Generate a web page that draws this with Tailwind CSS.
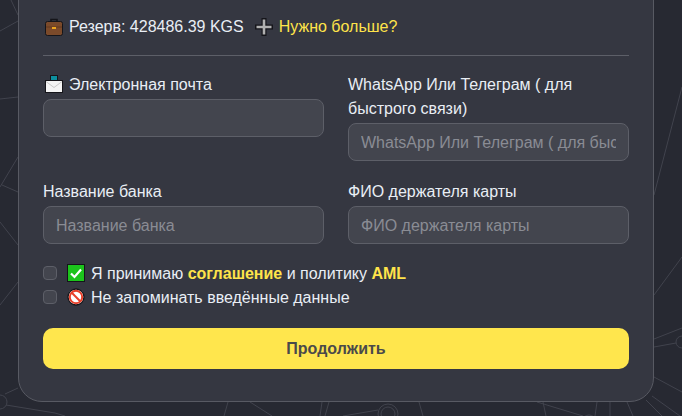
<!DOCTYPE html>
<html><head><meta charset="utf-8"><script src="https://cdn.jsdelivr.net/npm/@tailwindcss/browser@4"></script></head>
<body class="bg-[#272932] font-['Liberation_Sans',Arial,sans-serif]">
<div class="relative w-[682px] h-[416px] overflow-hidden flex flex-col justify-end">
<svg class="absolute inset-0" width="682" height="416" fill="none" stroke="#41434d" stroke-width="1">
<path d="M654 195L682 87M654 295L682 257M654 339L682 328M654 347L676 343M654 377L682 392M652 396L680 416M646 400L662 416"/>
<path d="M11 0L18 15M18 21L0 31M18 97L0 99M18 157L0 187M2 185L18 192M0 222L18 245M0 305L18 282M18 388L5 394M6 405L55 413L65 416"/>
<path d="M228 402L224 416M250 402L272 416M322 402L320 416M329 402L325 416M343 416L378 410M419 402L423 416M537 402L583 416M543 402L546 416M597 402L595 416M610 402V416M627 402L633 416"/>
<circle cx="682" cy="342" r="6"/><circle cx="0" cy="402" r="7"/><circle cx="388" cy="414" r="10"/><circle cx="388" cy="414" r="7"/><circle cx="589" cy="422" r="7"/>
</svg>
<main class="relative mb-[14px] mx-[18px] w-[636px] h-[440px] shrink-0 bg-[#353741] border border-[#585a63] rounded-[24px] px-6 flex flex-col justify-end pb-[32px] text-[#e9eef5] text-base">
<div class="flex items-center h-5">
<svg class="w-[18px] h-[18px] ml-[2px] mr-[6px] shrink-0" viewBox="0 0 18 18"><rect x="0.5" y="3.5" width="17" height="14" rx="2" fill="#7b4a2a" stroke="#15151a"/><path d="M6 4V1.5h6V4" fill="none" stroke="#15151a" stroke-width="1.6"/><path d="M1 9h16" stroke="#63391e"/><rect x="7" y="9" width="4" height="2" fill="#eda51e"/></svg>
<span>Резерв: 428486.39 KGS</span>
<svg class="w-[18px] h-[18px] ml-[11px] mr-[6px] shrink-0" viewBox="0 0 18 18"><path d="M9 0v18M0 9h18" stroke="#15151a" stroke-width="5"/><path d="M9 1.5v15M1.5 9h15" stroke="#b0b0b0" stroke-width="2.6"/></svg>
<span class="text-[#ffe44a]">Нужно больше?</span>
</div>
<hr class="mt-[18px] mb-[16px] border-[#5d5f68]">
<div class="grid grid-cols-2 gap-x-6 gap-y-[18px] items-start">
<div>
<label class="flex items-center h-6 mb-[3px]"><svg class="w-[18px] h-[18px] ml-[2px] mr-[6px] shrink-0" viewBox="0 0 18 18"><rect x="5.5" y="0.5" width="7" height="7" fill="#0d8f9e" stroke="#15151a"/><rect x="0.5" y="5.5" width="17" height="12" fill="#f4f4f4" stroke="#15151a"/><path d="M1 6.5l8 6 8-6" fill="none" stroke="#c9c9c9"/></svg><span class="pt-px">Электронная почта</span></label>
<input class="block w-full h-[38px] rounded-lg bg-[#43454e] border border-[#5d5f68]">
</div>
<div>
<label class="block leading-6 pt-px mb-[2px]">WhatsApp Или Телеграм ( для быстрого связи)</label>
<input class="block w-full h-[38px] rounded-lg bg-[#43454e] border border-[#5d5f68] px-3 pt-px placeholder:text-[#8a8c94]" placeholder="WhatsApp Или Телеграм ( для быстрого связи)">
</div>
<div>
<label class="block leading-6 pt-px mb-[2px]">Название банка</label>
<input class="block w-full h-[38px] rounded-lg bg-[#43454e] border border-[#5d5f68] px-3 pt-px placeholder:text-[#8a8c94]" placeholder="Название банка">
</div>
<div>
<label class="block leading-6 pt-px mb-[2px]">ФИО держателя карты</label>
<input class="block w-full h-[38px] rounded-lg bg-[#43454e] border border-[#5d5f68] px-3 pt-px placeholder:text-[#8a8c94]" placeholder="ФИО держателя карты">
</div>
</div>
<div class="mt-[17px] flex items-center h-6">
<span class="w-[14px] h-[14px] rounded-[4px] bg-[#43454e] border border-[#5d5f68] mr-[10px] shrink-0"></span>
<svg class="w-[18px] h-[18px] mr-[6px] shrink-0" viewBox="0 0 18 18"><rect x="0.5" y="0.5" width="17" height="17" fill="#1cc41c" stroke="#15151a"/><path d="M4 9.5l3.5 3.5L14 5.5" fill="none" stroke="#fff" stroke-width="2.2"/></svg>
<span class="pt-[2px]">Я принимаю <b class="text-[#ffe44a]">соглашение</b> и политику <b class="text-[#ffe44a]">AML</b></span>
</div>
<div class="flex items-center h-6">
<span class="w-[14px] h-[14px] rounded-[4px] bg-[#43454e] border border-[#5d5f68] mr-[10px] shrink-0"></span>
<svg class="w-[18px] h-[18px] mr-[6px] shrink-0" viewBox="0 0 18 18"><circle cx="9" cy="9" r="8" fill="#fff" stroke="#15151a" stroke-width="1.3"/><circle cx="9" cy="9" r="6.2" fill="none" stroke="#e8402a" stroke-width="2"/><path d="M4.8 4.8l8.4 8.4" stroke="#e8402a" stroke-width="2"/></svg>
<span class="pt-[2px]">Не запоминать введённые данные</span>
</div>
<button class="mt-[19px] h-[41px] w-full rounded-[10px] bg-[#ffe64d] text-[#4a4a4a] font-bold">Продолжить</button>
</main>
</div>
</body></html>
